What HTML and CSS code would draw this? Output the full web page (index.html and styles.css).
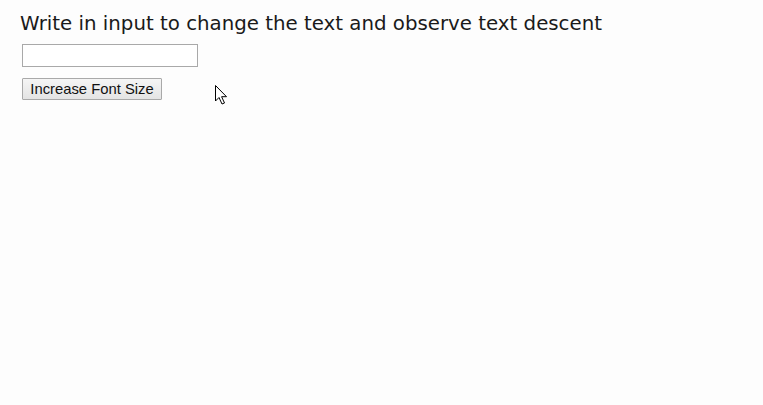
FILE: index.html
```html
<!DOCTYPE html>
<html>
<head>
<meta charset="utf-8">
<link rel="stylesheet" href="styles.css">
</head>
<body>
<div class="page">
  <h1 class="title">Write in input to change the text and observe text descent</h1>
  <input class="field" type="text">
  <button class="btn">Increase Font Size</button>
</div>
<svg class="cursor" width="14" height="22" viewBox="0 0 14 22">
  <path d="M1.5 1.5 L1.5 17 L5 13.5 L8 20 L10.5 19 L7.6 12.7 L12.5 12.7 Z" fill="#fff" stroke="#000" stroke-width="1" stroke-linejoin="miter"/>
</svg>
</body>
</html>
```
FILE: styles.css
```css
html, body {
  margin: 0;
  padding: 0;
  background: #fdfdfd;
}
.page {
  padding: 10px 0 0 20px;
  display: flex;
  flex-direction: column;
  align-items: flex-start;
}
.title {
  margin: 0;
  font-family: "DejaVu Sans", sans-serif;
  font-weight: normal;
  font-size: 19.8px;
  line-height: 28px;
  color: #1a1a1a;
}
.field {
  margin: 6px 0 0 2px;
  width: 176px;
  height: 23px;
  box-sizing: border-box;
  border: 1px solid #a9a9a9;
  padding: 0;
  background: #fff;
}
.btn {
  margin: 11px 0 0 2px;
  width: 140px;
  height: 22px;
  box-sizing: border-box;
  padding: 0 0 1px 0;
  font-family: "Liberation Sans", Arial, sans-serif;
  font-size: 14.8px;
  color: #111;
  border: 1px solid #a9a9a9;
  border-radius: 1px;
  background: linear-gradient(#f5f5f5, #e4e4e4);
}
.cursor {
  position: absolute;
  left: 214px;
  top: 84px;
}
```
